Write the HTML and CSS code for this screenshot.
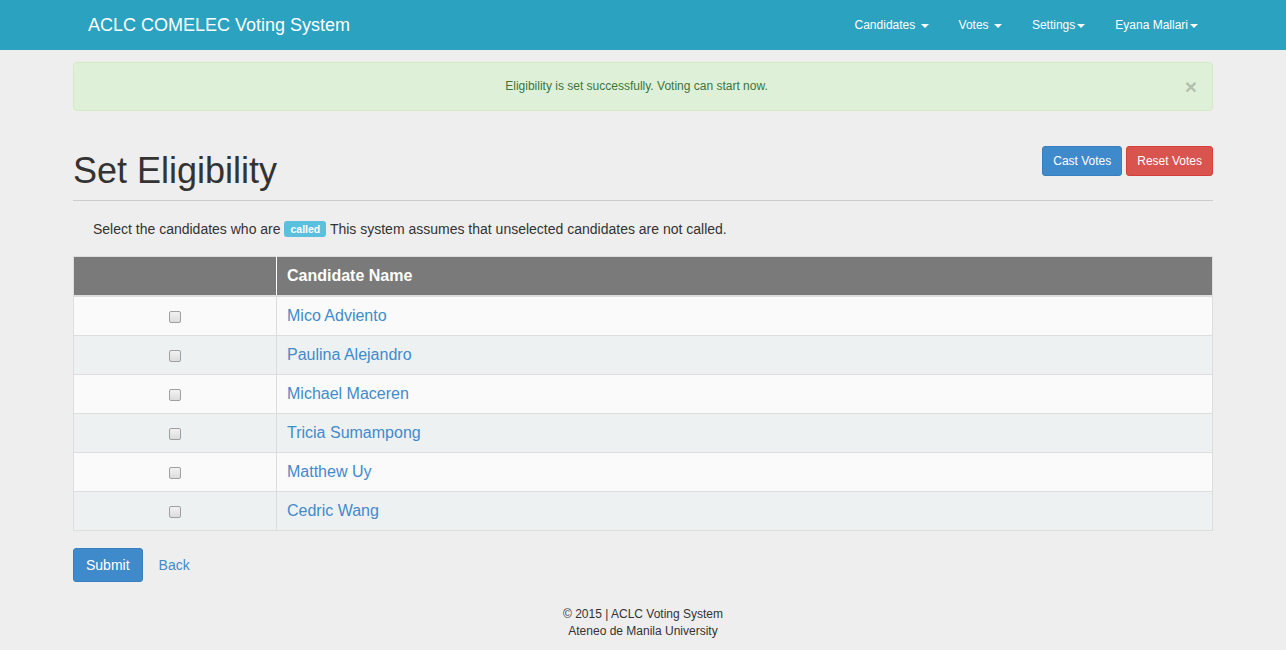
FILE: index.html
```html
<!DOCTYPE html>
<html>
<head>
<meta charset="utf-8">
<title>Set Eligibility</title>
<link rel="stylesheet" href="styles.css">
</head>
<body>
<nav class="navbar">
  <div class="container nav-inner">
    <a class="brand" href="#">ACLC COMELEC Voting System</a>
    <ul class="nav-right">
      <li><a href="#">Candidates <span class="caret"></span></a></li>
      <li><a href="#">Votes <span class="caret"></span></a></li>
      <li><a href="#">Settings<span class="caret"></span></a></li>
      <li><a href="#">Eyana Mallari<span class="caret"></span></a></li>
    </ul>
  </div>
</nav>
<main class="container">
  <div class="alert">
    <span>Eligibility is set successfully. Voting can start now.</span>
    <span class="close">×</span>
  </div>
  <div class="page-header">
    <h1>Set Eligibility</h1>
    <div class="actions">
      <a class="btn btn-primary btn-sm" href="#">Cast Votes</a>
      <a class="btn btn-danger btn-sm" href="#">Reset Votes</a>
    </div>
  </div>
  <p class="lead-text">Select the candidates who are <span class="label">called</span> This system assumes that unselected candidates are not called.</p>
  <table class="table">
    <thead>
      <tr><th class="col-check"></th><th>Candidate Name</th></tr>
    </thead>
    <tbody>
      <tr><td class="col-check"><input type="checkbox"></td><td><a href="#">Mico Adviento</a></td></tr>
      <tr><td class="col-check"><input type="checkbox"></td><td><a href="#">Paulina Alejandro</a></td></tr>
      <tr><td class="col-check"><input type="checkbox"></td><td><a href="#">Michael Maceren</a></td></tr>
      <tr><td class="col-check"><input type="checkbox"></td><td><a href="#">Tricia Sumampong</a></td></tr>
      <tr><td class="col-check"><input type="checkbox"></td><td><a href="#">Matthew Uy</a></td></tr>
      <tr><td class="col-check"><input type="checkbox"></td><td><a href="#">Cedric Wang</a></td></tr>
    </tbody>
  </table>
  <div class="form-actions">
    <a class="btn btn-primary" href="#">Submit</a>
    <a class="link" href="#">Back</a>
  </div>
</main>
<footer class="footer">
  <div>© 2015 | ACLC Voting System</div>
  <div>Ateneo de Manila University</div>
</footer>
</body>
</html>
```
FILE: styles.css
```css
* { box-sizing: border-box; }
html, body { margin: 0; padding: 0; }
body {
  background: #eeeeee;
  font-family: "Liberation Sans", Arial, sans-serif;
  font-size: 14px;
  line-height: 1.42857;
  color: #333;
}
a { text-decoration: none; }
.container { width: 1170px; margin: 0 auto; padding: 0 15px; }
.navbar { background: #2ba2c0; height: 50px; }
.nav-inner { display: flex; justify-content: space-between; align-items: center; height: 50px; }
.brand { color: #fff; font-size: 18px; padding: 0 15px; line-height: 50px; }
.nav-right { list-style: none; margin: 0; padding: 0; display: flex; }
.nav-right a { display: block; color: #fff; font-size: 12px; padding: 0 15px; line-height: 50px; }
.caret {
  display: inline-block; width: 0; height: 0; vertical-align: middle; margin-left: 2px;
  border-top: 4px solid #fff; border-left: 4px solid transparent; border-right: 4px solid transparent;
}
.alert {
  margin-top: 12px; height: 49px; position: relative;
  background: #dff0d8; border: 1px solid #d6e9c6; border-radius: 4px; color: #3c763d;
  font-size: 12px; display: flex; align-items: center; justify-content: center;
  padding: 0 28px 0 15px;
}
.close { position: absolute; right: 15px; top: 13px; font-size: 21px; line-height: 1; font-weight: bold; color: #000; opacity: 0.2; }
.page-header {
  display: flex; justify-content: space-between; align-items: flex-start;
  margin-top: 35px; padding-bottom: 9px; border-bottom: 1px solid #ccc;
}
h1 { margin: 0; font-size: 36px; font-weight: 500; line-height: 1.1; color: #333; padding-top: 5px; }
.actions { display: flex; gap: 4px; }
.btn {
  display: inline-block; color: #fff; border: 1px solid transparent; border-radius: 3px;
  font-size: 14px; line-height: 20px; padding: 6px 12px;
}
.btn-sm { font-size: 12px; line-height: 18px; padding: 5px 10px; }
.btn-primary { background: #3f8acb; border-color: #3a7fbd; }
.btn-danger { background: #d9534f; border-color: #d43f3a; }
.lead-text { margin: 19px 0 16px; padding-left: 20px; }
.label {
  display: inline-block; background: #5bc0de; color: #fff; font-size: 10.5px; font-weight: bold;
  line-height: 1; padding: 3px 6px 3px; border-radius: 3px; vertical-align: 1px;
}
.table { width: 100%; border-collapse: collapse; border: 1px solid #ddd; font-size: 16px; }
.table th, .table td { padding: 8px 10px; line-height: 22px; text-align: left; }
.table thead th { background: #7a7a7a; color: #fff; font-weight: bold; border-bottom: 2px solid #ddd; border-left: 1px solid #fff; }
.table thead th:first-child { border-left: none; }
.table td { border-top: 1px solid #ddd; border-left: 1px solid #ddd; }
.table tbody tr:nth-child(odd) td { background: #fafafa; }
.table tbody tr:nth-child(even) td { background: #edf1f2; }
.table .col-check { width: 203px; text-align: center; }
.table td a { color: #428bca; }
.table input {
  -webkit-appearance: none; appearance: none;
  margin: 0 0 0 -1px; width: 12px; height: 12px; vertical-align: -2px;
  border: 1px solid #a0a0a0; border-radius: 2px;
  background: linear-gradient(#f2f2f2, #dcdcdc);
}
.form-actions { display: flex; align-items: center; gap: 16px; margin-top: 17px; }
.form-actions .btn { padding: 6px 12px; }
.link { color: #428bca; padding-top: 2px; }
.footer { text-align: center; font-size: 12px; line-height: 17px; margin-top: 24px; padding-bottom: 12px; }
```
